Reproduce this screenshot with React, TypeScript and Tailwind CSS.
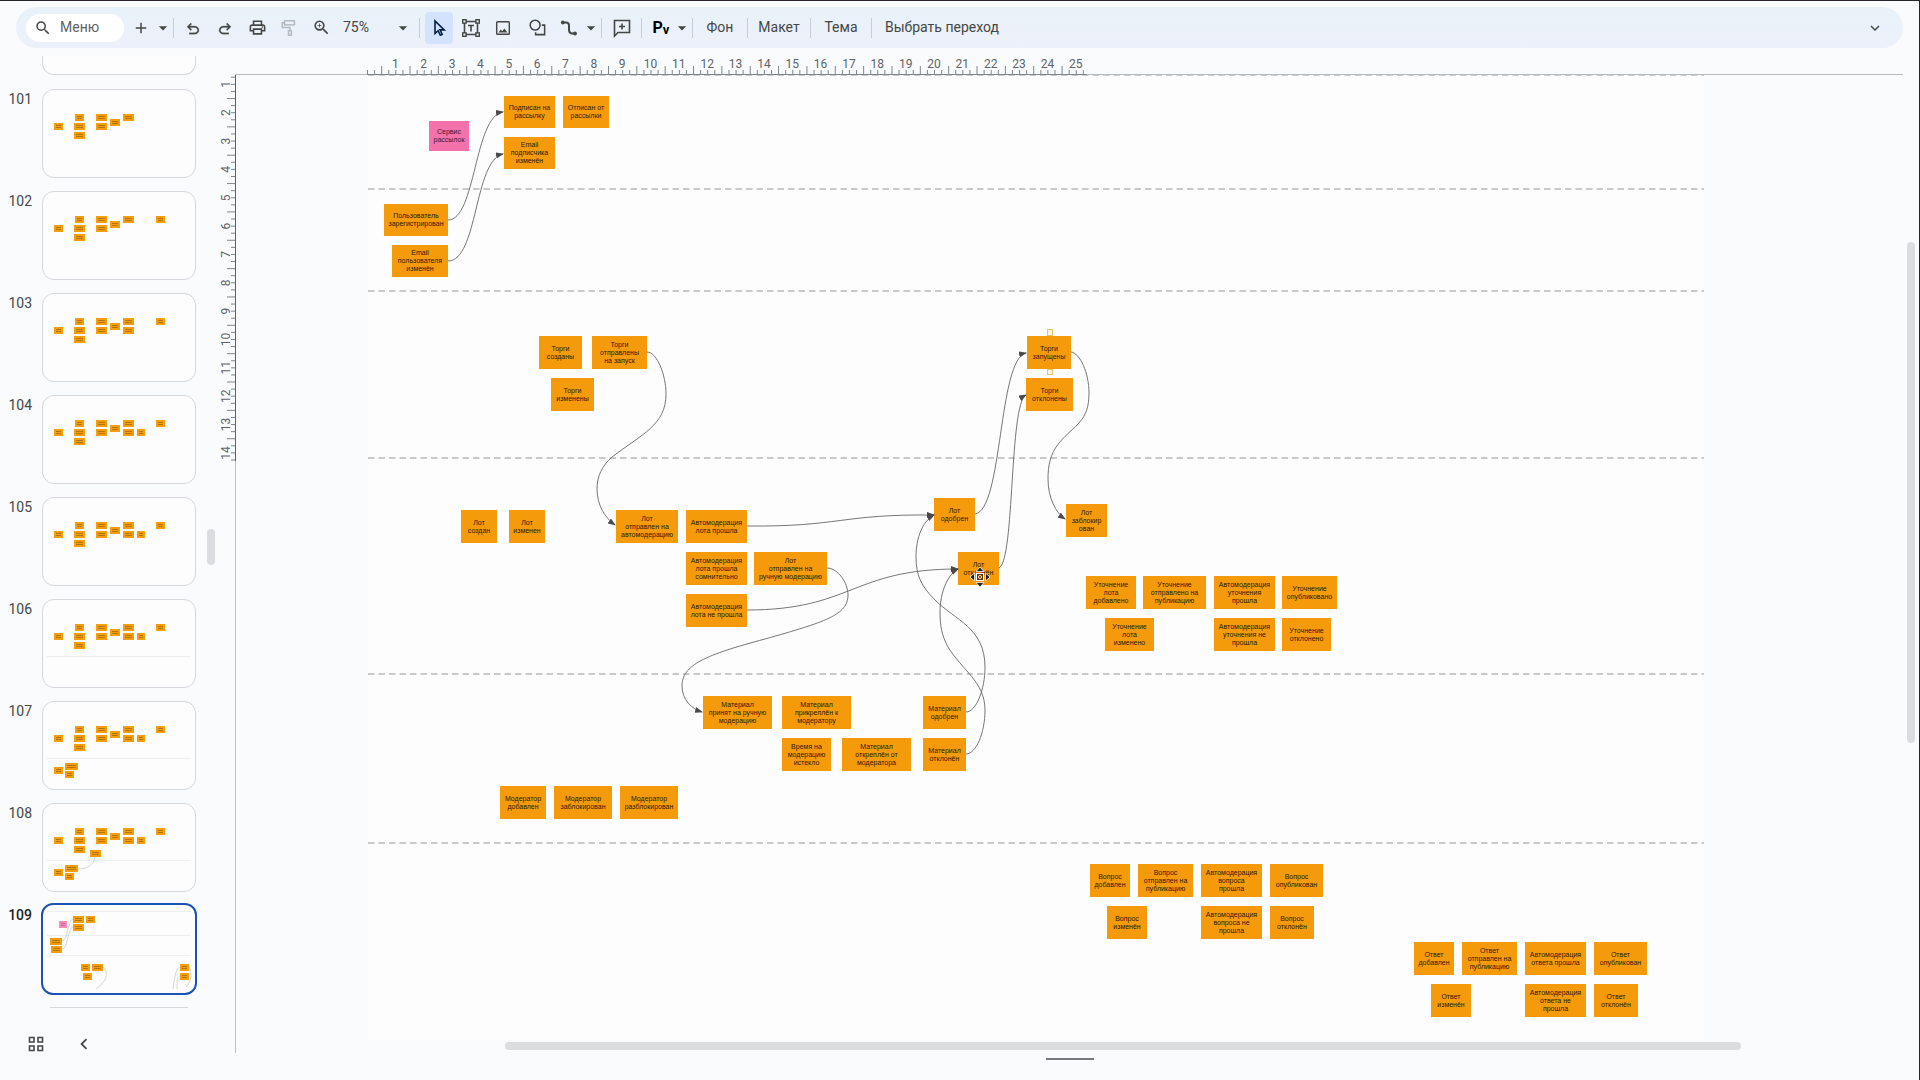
import React from "react";
import { MdSearch, MdAdd, MdArrowDropDown, MdZoomIn, MdOutlinePrint, MdKeyboardArrowDown, MdKeyboardArrowLeft } from "react-icons/md";

type Box = [x: number, y: number, w: number, h: number, text: string];

/* Slide origin and size in document space */
const ORIGIN = { x: 367, y: 75 };
const SLIDE = { w: 1337, h: 965 };

const notes: Box[] = [
  [504, 96, 51, 32, "Подписан на\nрассылку"],
  [563, 96, 46, 32, "Отписан от\nрассылки"],
  [504, 137, 51, 32, "Email\nподписчика\nизменён"],
  [384, 204, 64, 32, "Пользователь\nзарегистрирован"],
  [392, 245, 56, 32, "Email\nпользователя\nизменён"],
  [539, 336, 43, 33, "Торги\nсозданы"],
  [592, 336, 55, 33, "Торги\nотправлены\nна запуск"],
  [551, 378, 43, 33, "Торги\nизменены"],
  [1027, 336, 44, 33, "Торги\nзапущены"],
  [1026, 378, 47, 33, "Торги\nотклонены"],
  [461, 510, 36, 33, "Лот\nсоздан"],
  [509, 510, 36, 33, "Лот\nизменен"],
  [616, 510, 62, 33, "Лот\nотправлен на\nавтомодерацию"],
  [686, 510, 61, 33, "Автомодерация\nлота прошла"],
  [686, 552, 61, 33, "Автомодерация\nлота прошла\nсомнительно"],
  [754, 552, 73, 33, "Лот\nотправлен на\nручную модерацию"],
  [686, 594, 61, 33, "Автомодерация\nлота не прошла"],
  [934, 498, 41, 33, "Лот\nодобрен"],
  [958, 552, 41, 33, "Лот\nотклонён"],
  [1066, 504, 41, 33, "Лот\nзаблокир\nован"],
  [1086, 576, 50, 33, "Уточнение\nлота\nдобавлено"],
  [1143, 576, 63, 33, "Уточнение\nотправлено на\nпубликацию"],
  [1214, 576, 61, 33, "Автомодерация\nуточнения\nпрошла"],
  [1282, 576, 55, 33, "Уточнение\nопубликовано"],
  [1105, 618, 49, 33, "Уточнение\nлота\nизменено"],
  [1214, 618, 61, 33, "Автомодерация\nуточнения не\nпрошла"],
  [1282, 618, 49, 33, "Уточнение\nотклонено"],
  [703, 696, 69, 33, "Материал\nпринят на ручную\nмодерацию"],
  [782, 696, 69, 33, "Материал\nприкреплён к\nмодератору"],
  [923, 696, 43, 33, "Материал\nодобрен"],
  [782, 738, 49, 33, "Время на\nмодерацию\nистекло"],
  [842, 738, 69, 33, "Материал\nоткреплён от\nмодератора"],
  [923, 738, 43, 33, "Материал\nотклонён"],
  [500, 786, 46, 33, "Модератор\nдобавлен"],
  [554, 786, 58, 33, "Модератор\nзаблокирован"],
  [620, 786, 58, 33, "Модератор\nразблокирован"],
  [1090, 864, 40, 33, "Вопрос\nдобавлен"],
  [1138, 864, 55, 33, "Вопрос\nотправлен на\nпубликацию"],
  [1201, 864, 61, 33, "Автомодерация\nвопроса\nпрошла"],
  [1270, 864, 53, 33, "Вопрос\nопубликован"],
  [1107, 906, 40, 33, "Вопрос\nизменён"],
  [1201, 906, 61, 33, "Автомодерация\nвопроса не\nпрошла"],
  [1270, 906, 44, 33, "Вопрос\nотклонён"],
  [1414, 942, 40, 33, "Ответ\nдобавлен"],
  [1462, 942, 55, 33, "Ответ\nотправлен на\nпубликацию"],
  [1525, 942, 61, 33, "Автомодерация\nответа прошла"],
  [1594, 942, 53, 33, "Ответ\nопубликован"],
  [1431, 984, 40, 33, "Ответ\nизменён"],
  [1525, 984, 61, 33, "Автомодерация\nответа не\nпрошла"],
  [1594, 984, 44, 33, "Ответ\nотклонён"],
];

const laneLines = [75, 189, 291, 458, 674, 843];

const connectors = [
  "M448 220 C476 220 474 116 503 112",
  "M448 261 C478 261 474 160 503 154",
  "M647 352 C657 352 666 375 666 394 C666 425 642 434 612 457 C602 466 597 476 597 489 C597 505 605 518 615 525",
  "M747 526 C840 527 840 514 934 515",
  "M747 610 C852 610 852 569 958 569",
  "M827 568 C838 568 848 583 848 595 C848 615 825 622 765 639 C705 655 682 665 682 686 C682 700 692 709 702 712",
  "M975 514 C1003 510 998 359 1026 353",
  "M999 568 C1015 560 1009 404 1026 395",
  "M1071 352 C1080 353 1089 373 1089 393 C1089 422 1075 424 1059 443 C1050 454 1048 466 1048 479 C1048 498 1056 513 1065 519",
  "M966 712 C976 712 985 690 985 667 C985 628 955 620 935 600 C921 586 916 575 916 557 C916 537 923 521 934 515",
  "M966 754 C976 754 985 733 985 710 C985 682 962 670 948 647 C942 636 940 626 940 612 C940 592 948 574 958 569",
];

type Rect = [x: number, y: number, w: number, pink?: boolean];

const base: Rect[] = [
  [11, 34, 9], [32, 25, 9], [31, 34, 11], [31, 43, 11], [53, 25, 11], [53, 34, 11], [67, 30, 10], [80, 25, 11],
];
const s102: Rect[] = [...base, [113, 25, 9]];
const s103: Rect[] = [...s102, [80, 34, 11]];
const s104: Rect[] = [...s103, [94, 34, 8]];
const s107: Rect[] = [...s104, [11, 66, 9], [22, 62, 13], [22, 70, 9]];
const s108: Rect[] = [...s107, [47, 47, 11]];
const s109: Rect[] = [
  [16, 16, 8, true], [30, 11, 11], [43, 11, 9], [30, 19, 11], [7, 33, 12], [8, 41, 11], [38, 59, 9], [49, 59, 11],
  [40, 68, 9], [137, 59, 9], [137, 68, 9],
];

interface Slide {
  n: number;
  rects: Rect[];
  lines?: number[];
  curves?: string[];
  active?: boolean;
}

const slides: Slide[] = [
  { n: 101, rects: base },
  { n: 102, rects: s102 },
  { n: 103, rects: s103 },
  { n: 104, rects: s104 },
  { n: 105, rects: s104 },
  { n: 106, rects: s104, lines: [57] },
  { n: 107, rects: s107, lines: [57] },
  { n: 108, rects: s108, lines: [57], curves: ["M52 54 C51 62 44 66 35 66"] },
  {
    n: 109,
    rects: s109,
    lines: [6, 30, 50],
    curves: ["M19 36 C25 36 25 14 30 14", "M19 44 C25 44 25 22 30 22", "M60 62 C66 68 64 76 53 84", "M130 84 C132 70 133 63 137 62", "M134 84 C134 76 134 72 137 71", "M146 62 C149 68 149 76 143 82"],
    active: true,
  },
];

function Thumb({ s }: { s: Slide }) {
  return (
    <li className="flex h-[102px] items-start">
      <span
        className={
          s.active
            ? "w-8 shrink-0 text-right text-[14px] leading-5 font-medium text-[#1f1f1f]"
            : "w-8 shrink-0 text-right text-[14px] leading-5 text-[#444746]"
        }
      >
        {s.n}
      </span>
      <button
        aria-label={"Слайд " + s.n}
        className={
          s.active
            ? "-mt-0.5 ml-[9px] h-[92px] w-[156px] overflow-hidden rounded-xl border-2 border-[#1a53b5] bg-[#fdfdfd]"
            : "ml-[10px] h-[89px] w-[154px] overflow-hidden rounded-xl border border-[#d5d7dc] bg-[#fdfdfd]"
        }
      >
        <svg viewBox={s.active ? "0 0 152 88" : "0 1 152 87"} className="block h-full w-full">
          {(s.lines || []).map((y) => (
            <line key={y} x1="4" x2="148" y1={y + 0.5} y2={y + 0.5} stroke="#edefee" />
          ))}
          {(s.curves || []).map((d) => (
            <path key={d} d={d} fill="none" stroke="#c3c6c9" strokeWidth="0.7" />
          ))}
          {s.rects.map(([x, y, w, pink], i) => (
            <g key={i}>
              <rect x={x} y={y} width={w} height="7" fill={pink ? "#f58cb8" : "#f59e0b"} />
              <path d={`M${x + 2} ${y + 2.5}h${w - 4}M${x + 2} ${y + 4.5}h${w - 4}`} stroke={pink ? "#c96a92" : "#b8740c"} strokeWidth="1" />
            </g>
          ))}
        </svg>
      </button>
    </li>
  );
}

const CM = 28.35;

function RulerTop() {
  const ticks = Array.from({ length: 102 }, (_, i) => i);
  return (
    <svg width="724" height="27" className="ml-[132px] block" aria-hidden="true">
      {ticks.map((i) => (
        <line key={i} x1={0.5 + (i * CM) / 4} x2={0.5 + (i * CM) / 4} y1={i % 4 === 2 ? 18 : 22} y2={27} stroke="#80868b" />
      ))}
      <line x1="0" x2="720" y1="26.5" y2="26.5" stroke="#80868b" />
      {Array.from({ length: 25 }, (_, i) => (
        <text key={i} x={(i + 1) * CM} y="20" textAnchor="middle" fontSize="12" fill="#5f6368">
          {i + 1}
        </text>
      ))}
    </svg>
  );
}

function RulerLeft() {
  const ticks = Array.from({ length: 55 }, (_, i) => i + 3);
  return (
    <svg width="17" height="386" className="block" aria-hidden="true">
      {ticks.map((i) => (
        <line key={i} y1={(i * CM) / 4 - 19} y2={(i * CM) / 4 - 19} x1={i % 4 === 2 ? 8 : 12} x2="17" stroke="#80868b" />
      ))}
      <line x1="16.5" x2="16.5" y1="0" y2="386" stroke="#5f6368" />
      {Array.from({ length: 14 }, (_, i) => {
        const y = (i + 1) * CM - 19;
        return (
          <text key={i} transform={`translate(11 ${y}) rotate(-90)`} textAnchor="middle" fontSize="12" fill="#5f6368">
            {i + 1}
          </text>
        );
      })}
    </svg>
  );
}

function Sep() {
  return <span className="h-5 w-px shrink-0 bg-[#c7cdd6]" />;
}

function Tool({ label, className, children }: { label: string; className?: string; children: React.ReactNode }) {
  return (
    <button aria-label={label} className={"flex h-8 shrink-0 items-center justify-center " + (className || "w-8")}>
      {children}
    </button>
  );
}

function Icon({ children, className }: { children: React.ReactNode; className?: string }) {
  return (
    <svg viewBox="0 0 20 20" className={className || "h-5 w-5"} fill="none" stroke="currentColor" strokeWidth="1.6" aria-hidden="true">
      {children}
    </svg>
  );
}

function Toolbar() {
  return (
    <header className="mx-4 mt-1.5 flex h-[41px] shrink-0 items-center rounded-full bg-linear-to-b from-[#e8f2f9] to-[#edf0fa] text-[#444746]">
      <label className="ml-2.5 flex h-7 w-[98px] shrink-0 items-center rounded-full bg-white">
        <MdSearch className="ml-2 h-[18px] w-[18px]" />
        <input aria-label="Меню" placeholder="Меню" className="ml-2 w-14 bg-transparent text-[14px] outline-none placeholder:text-[#5f6368]" />
      </label>
      <Tool label="Новый слайд" className="ml-[5px] w-6"><MdAdd className="h-[18px] w-[18px]" /></Tool>
      <Tool label="Варианты нового слайда" className="w-5"><MdArrowDropDown className="h-5 w-5" /></Tool>
      <Sep />
      <Tool label="Отменить" className="ml-[3px] w-8">
        <svg viewBox="0 -960 960 960" className="mt-0.5 h-[18px] w-[18px]" fill="currentColor" stroke="currentColor" strokeWidth="12"><path d="M280-200v-80h284q63 0 109.5-40T720-420q0-60-46.5-100T564-560H312l104 104-56 56-200-200 200-200 56 56-104 104h252q97 0 166.5 63T800-420q0 94-69.5 157T564-200H280Z" /></svg>
      </Tool>
      <Tool label="Повторить">
        <svg viewBox="0 -960 960 960" className="mt-0.5 h-[18px] w-[18px]" fill="currentColor" stroke="currentColor" strokeWidth="12"><path d="M396-200q-97 0-166.5-63T160-420q0-94 69.5-157T396-640h252L544-744l56-56 200 200-200 200-56-56 104-104H396q-63 0-109.5 40T240-420q0 60 46.5 100T396-280h284v80H396Z" /></svg>
      </Tool>
      <Tool label="Печать"><MdOutlinePrint className="h-[19px] w-[19px]" /></Tool>
      <Tool label="Копировать форматирование" className="w-8 text-[#b4b8bf]">
        <Icon className="h-[18px] w-[18px]">
          <rect x="5" y="2" width="11" height="4.5" />
          <path d="M5 4.2H2.5v5.3H11v4" />
          <rect x="9.4" y="13" width="3.2" height="5" />
        </Icon>
      </Tool>
      <Tool label="Масштаб"><MdZoomIn className="h-[19px] w-[19px]" /></Tool>
      <input aria-label="Масштаб в процентах" defaultValue="75%" className="ml-1.5 w-[50px] bg-transparent text-[14px] text-[#444746] outline-none" />
      <Tool label="Выбрать масштаб" className="w-5"><MdArrowDropDown className="h-5 w-5" /></Tool>
      <span className="w-1.5" />
      <Sep />
      <Tool label="Выбрать" className="ml-[5px] w-7 rounded bg-[#d3e3fd] text-[#041e49]">
        <Icon><path d="M6 3v12.5l3.1-2.8 2.2 4.6 1.9-.9-2.2-4.5h4.2z" /></Icon>
      </Tool>
      <Tool label="Текстовое поле" className="ml-0.5 w-8">
        <Icon>
          <path d="M4.500 3.500h11M4.500 16.500h11M3.500 4.500v11M16.500 4.500v11" />
          <path d="M7 7.500h6M10 7.500v6" />
          <g fill="#ebf1fa" strokeWidth="1.4">
            <rect x="1.700" y="1.700" width="3.400" height="3.400" /><rect x="14.900" y="1.700" width="3.400" height="3.400" />
            <rect x="1.700" y="14.900" width="3.400" height="3.400" /><rect x="14.900" y="14.900" width="3.400" height="3.400" />
          </g>
        </Icon>
      </Tool>
      <Tool label="Изображение">
        <Icon className="h-[18px] w-[18px]">
          <rect x="3" y="3" width="14" height="14" rx="1" />
          <path d="M5 15l2.500-3.200 1.700 1.700 2.300-3 3.500 4.500z" fill="currentColor" stroke="none" />
        </Icon>
      </Tool>
      <Tool label="Фигура" className="ml-0.5 w-8">
        <Icon className="h-[19px] w-[19px]">
          <circle cx="7.500" cy="7.500" r="5.200" />
          <path d="M14.500 7.500h3v10h-9.500v-2.500" />
        </Icon>
      </Tool>
      <Tool label="Линия">
        <Icon>
          <path d="M4 4.500h3c2.500 0 3 1.500 3 3v4c0 2.500 1 4 3.500 4H16" strokeWidth="2" />
          <circle cx="3.800" cy="4.500" r="1.900" fill="currentColor" stroke="none" />
          <circle cx="16" cy="15.500" r="1.900" fill="currentColor" stroke="none" />
        </Icon>
      </Tool>
      <Tool label="Типы линий" className="-ml-1 w-5"><MdArrowDropDown className="h-5 w-5" /></Tool>
      <Sep />
      <Tool label="Комментарий" className="ml-1 w-8">
        <Icon>
          <path d="M2.500 18V2.500h15v12H6z" />
          <path d="M10 5.500v6M7 8.500h6" />
        </Icon>
      </Tool>
      <span className="w-[3px]" />
      <Sep />
      <Tool label="Способ ввода" className="ml-2.5 w-[18px] text-black">
        <span className="flex items-end font-bold">
          <span className="text-[16px] leading-5">P</span>
          <span className="text-[13px] leading-4">v</span>
        </span>
      </Tool>
      <Tool label="Способы ввода" className="ml-0.5 w-5"><MdArrowDropDown className="h-5 w-5" /></Tool>
      <Sep />
      <button className="h-8 w-[54px] text-[14px]">Фон</button>
      <Sep />
      <button className="h-8 w-[62px] text-[14px]">Макет</button>
      <Sep />
      <button className="h-8 w-[60px] text-[14px]">Тема</button>
      <Sep />
      <button className="h-8 px-[13px] text-[14px] whitespace-nowrap">Выбрать переход</button>
      <Tool label="Скрыть меню" className="mr-3 ml-auto w-8"><MdKeyboardArrowDown className="h-[18px] w-[18px]" /></Tool>
    </header>
  );
}

function Canvas() {
  return (
    <div
      className="relative ml-[131px] shrink-0 overflow-hidden bg-[#fdfdfd] font-['Liberation_Sans',sans-serif]"
      style={{ width: SLIDE.w, height: SLIDE.h }}
    >
      <svg viewBox="367 75 1337 965" className="absolute inset-0 h-full w-full">
        {laneLines.map((y) => (
          <line key={y} x1="368" x2="1704" y1={y} y2={y} stroke="#b9b9b9" strokeWidth="1.5" strokeDasharray="6.500 4" />
        ))}
      </svg>
      <div
        className="absolute flex items-center justify-center bg-[#f472ac] text-center text-[7px] leading-[8px] whitespace-pre text-[#3f1730]"
        style={{ left: 429 - ORIGIN.x, top: 121 - ORIGIN.y, width: 40, height: 30 }}
      >
        {"Сервис\nрассылок"}
      </div>
      {notes.map(([x, y, w, h, t]) => (
        <div
          key={x + "-" + y}
          className="absolute flex items-center justify-center bg-[#f59a0b] text-center text-[7px] leading-[8px] whitespace-pre text-[#2e1a02]"
          style={{ left: x - ORIGIN.x, top: y - ORIGIN.y, width: w, height: h }}
        >
          {t}
        </div>
      ))}
      <svg viewBox="367 75 1337 965" className="absolute inset-0 h-full w-full" fill="none">
        <defs>
          <marker id="head" viewBox="0 0 8 6" refX="7" refY="3" markerWidth="8" markerHeight="6" markerUnits="userSpaceOnUse" orient="auto">
            <path d="M0 0L8 3L0 6z" fill="#4a4a4a" />
          </marker>
        </defs>
        {connectors.map((d) => (
          <path key={d} d={d} stroke="#666" strokeWidth="0.9" markerEnd="url(#head)" />
        ))}
        <g stroke="#ecc46c" fill="#fdf6e3">
          <rect x="1047.500" y="329.500" width="5" height="6" />
          <rect x="1047.500" y="369.500" width="5" height="5" />
        </g>
        <g transform="translate(980 577)">
          <path d="M0-10l4 4.500H-4zM0 10l4-4.500H-4zM-10 0l4.500-4v8zM10 0l-4.500-4v8z" fill="#222" stroke="#e8e3ea" strokeWidth="0.9" />
          <rect x="-4" y="-4" width="8" height="8" fill="#222" />
          <rect x="-3.500" y="-3.500" width="7" height="7" fill="#5a3a12" stroke="#fff" />
          <circle r="1.600" stroke="#f7d9a8" fill="#7a4a0c" />
        </g>
      </svg>
    </div>
  );
}

export default function App() {
  return (
    <div className="flex h-screen flex-col overflow-hidden border-t border-r border-[#26242a] bg-[#f9fbfd] font-[Roboto,sans-serif]">
      <Toolbar />
      <div className="flex min-h-0 flex-1">
        <aside className="flex w-[219px] shrink-0 flex-col pt-2">
          <div className="flex h-[953px] min-h-0">
            <ol className="flex w-[207px] flex-col overflow-hidden">
              <li className="mb-3.5 ml-[42px] h-[19px] w-[154px] shrink-0 rounded-b-xl border border-t-0 border-[#d5d7dc] bg-[#fdfdfd]" />
              {slides.map((s) => (
                <Thumb key={s.n} s={s} />
              ))}
              <li className="ml-[50px] h-px w-[138px] shrink-0 bg-[#d5d7dc]" />
            </ol>
            <div className="w-2">
              <div className="mt-[473px] h-9 rounded bg-[#dadce0]" />
            </div>
          </div>
          <div className="flex flex-1 items-center pb-0.5 pl-[27px] text-[#444746]">
            <button aria-label="Сетка" className="flex h-[18px] w-[18px] items-center justify-center">
              <svg viewBox="0 0 18 18" className="h-[18px] w-[18px]" fill="none" stroke="currentColor" strokeWidth="1.6">
                <path d="M2.500 2.500h4.500v4.500H2.500zM11 2.500h4.500v4.500H11zM2.500 11h4.500v4.500H2.500zM11 11h4.500v4.500H11z" />
              </svg>
            </button>
            <button aria-label="Скрыть ленту" className="ml-7"><MdKeyboardArrowLeft className="h-[22px] w-[22px]" /></button>
          </div>
        </aside>
        <main className="flex min-w-0 flex-1 flex-col">
          <div className="flex h-[27px] shrink-0">
            <div className="w-4" />
            <div className="flex-1 bg-linear-to-t from-[#b9bbbd] from-[1px] to-transparent to-[1px]">
              <RulerTop />
            </div>
          </div>
          <div className="flex min-h-0 flex-1">
            <div className="w-[17px] shrink-0 border-r border-[#c0c3c6]">
              <RulerLeft />
            </div>
            <div className="flex min-w-0 flex-1 flex-col overflow-hidden">
              <Canvas />
              <div className="mt-0.5 mr-[162px] ml-[269px] h-2 shrink-0 rounded-sm bg-[#dadcde]" />
            </div>
          </div>
          <div className="flex h-[27px] shrink-0 justify-center pt-[5px] pl-[18px]">
            <div className="h-0.5 w-12 bg-[#777a7d]" />
          </div>
        </main>
        <div className="w-4 shrink-0 pt-[194px] pl-1">
          <div className="h-[501px] w-2 rounded bg-[#dadce0]" />
        </div>
      </div>
    </div>
  );
}
